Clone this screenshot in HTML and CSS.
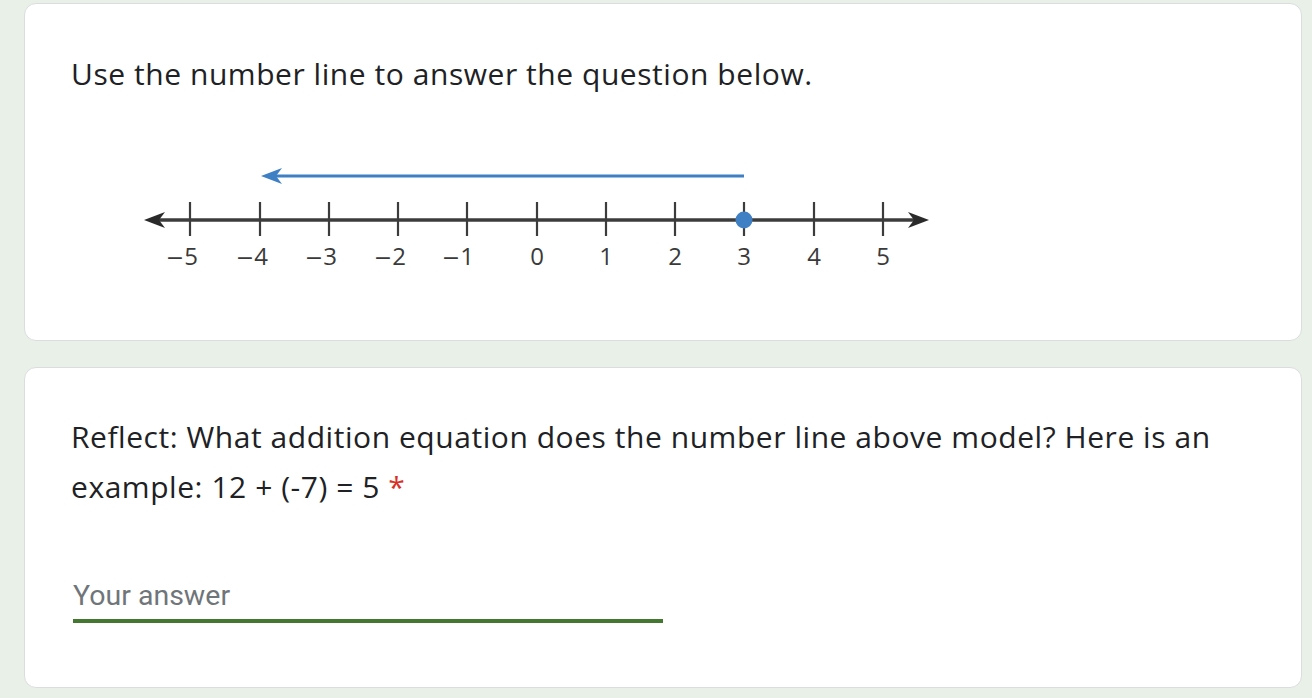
FILE: index.html
```html
<!DOCTYPE html>
<html lang="en">
<head>
<meta charset="utf-8">
<title>Number line question</title>
<link rel="stylesheet" href="styles.css">
</head>
<body>
<main class="form">
  <section class="card card-info">
    <div class="title">Use the number line to answer the question below.</div>
    <svg class="numline" width="820" height="120" viewBox="0 0 820 120" xmlns="http://www.w3.org/2000/svg">
      <!-- blue jump arrow -->
      <line x1="142" y1="21" x2="613" y2="21" stroke="#3f7fc3" stroke-width="3"/>
      <path d="M130 21 L151 13 L145 21 L151 29 Z" fill="#3f7fc3"/>
      <!-- axis -->
      <line x1="24" y1="65" x2="788" y2="65" stroke="#3c3c3c" stroke-width="3.5"/>
      <path d="M13 65 L34 57 L28 65 L34 73 Z" fill="#2a2a2a"/>
      <path d="M798 65 L777 57 L783 65 L777 73 Z" fill="#2a2a2a"/>
      <g stroke="#3c3c3c" stroke-width="2.2">
        <line x1="59" y1="47" x2="59" y2="81"/>
        <line x1="129" y1="47" x2="129" y2="81"/>
        <line x1="198" y1="47" x2="198" y2="81"/>
        <line x1="267" y1="47" x2="267" y2="81"/>
        <line x1="336" y1="47" x2="336" y2="81"/>
        <line x1="406" y1="47" x2="406" y2="81"/>
        <line x1="475" y1="47" x2="475" y2="81"/>
        <line x1="544" y1="47" x2="544" y2="81"/>
        <line x1="613" y1="47" x2="613" y2="81"/>
        <line x1="683" y1="47" x2="683" y2="81"/>
        <line x1="752" y1="47" x2="752" y2="81"/>
      </g>
      <circle cx="613" cy="65" r="8.5" fill="#3f7fc3"/>
      <g font-family="Open Sans, DejaVu Sans, sans-serif" font-size="24" fill="#3a3a3a" text-anchor="end">
        <text x="67" y="110"><tspan font-family="DejaVu Sans, sans-serif" font-size="22">−</tspan>5</text>
        <text x="137" y="110"><tspan font-family="DejaVu Sans, sans-serif" font-size="22">−</tspan>4</text>
        <text x="206" y="110"><tspan font-family="DejaVu Sans, sans-serif" font-size="22">−</tspan>3</text>
        <text x="275" y="110"><tspan font-family="DejaVu Sans, sans-serif" font-size="22">−</tspan>2</text>
        <text x="343" y="110"><tspan font-family="DejaVu Sans, sans-serif" font-size="22">−</tspan>1</text>
      </g>
      <g font-family="Open Sans, DejaVu Sans, sans-serif" font-size="24" fill="#3a3a3a" text-anchor="middle">
        <text x="406" y="110">0</text>
        <text x="475" y="110">1</text>
        <text x="544" y="110">2</text>
        <text x="613" y="110">3</text>
        <text x="683" y="110">4</text>
        <text x="752" y="110">5</text>
      </g>
    </svg>
  </section>

  <section class="card card-question">
    <div class="title qtitle">Reflect: What addition equation does the number line above model? Here is an<br>example: 12 + (-7) = 5 <span class="req">*</span></div>
    <div class="answer">Your answer</div>
  </section>
</main>
</body>
</html>
```

FILE: styles.css
```css
html, body {
  margin: 0;
  padding: 0;
}

body {
  background: #e9f0e7;
  width: 1312px;
  height: 698px;
  overflow: hidden;
}

.form {
  padding: 3px 10px 0 24px;
  display: flex;
  flex-direction: column;
  gap: 26px;
}

.card {
  background: #ffffff;
  border: 1px solid #dadce0;
  border-radius: 12px;
  padding: 0 48px;
}

.card-info {
  padding-top: 49px;
  padding-bottom: 65px;
}

.card-question {
  padding-top: 44px;
  padding-bottom: 64px;
}

.title {
  font-family: "Open Sans", "Noto Sans", sans-serif;
  font-size: 30px;
  font-weight: 500;
  line-height: 42px;
  letter-spacing: 0.55px;
  color: #202124;
  margin-left: -2px;
  white-space: nowrap;
}

.qtitle {
  line-height: 50px;
}

.req {
  color: #d93025;
}

.numline {
  display: block;
  margin: 60px 0 0 58px;
}

.answer {
  margin-top: 64px;
  width: 590px;
  height: 40px;
  padding-bottom: 3px;
  line-height: 40px;
  font-family: Roboto, "Liberation Sans", sans-serif;
  font-size: 28.5px;
  color: #70757a;
  border-bottom: 4px solid #44772f;
  box-sizing: content-box;
}
```
